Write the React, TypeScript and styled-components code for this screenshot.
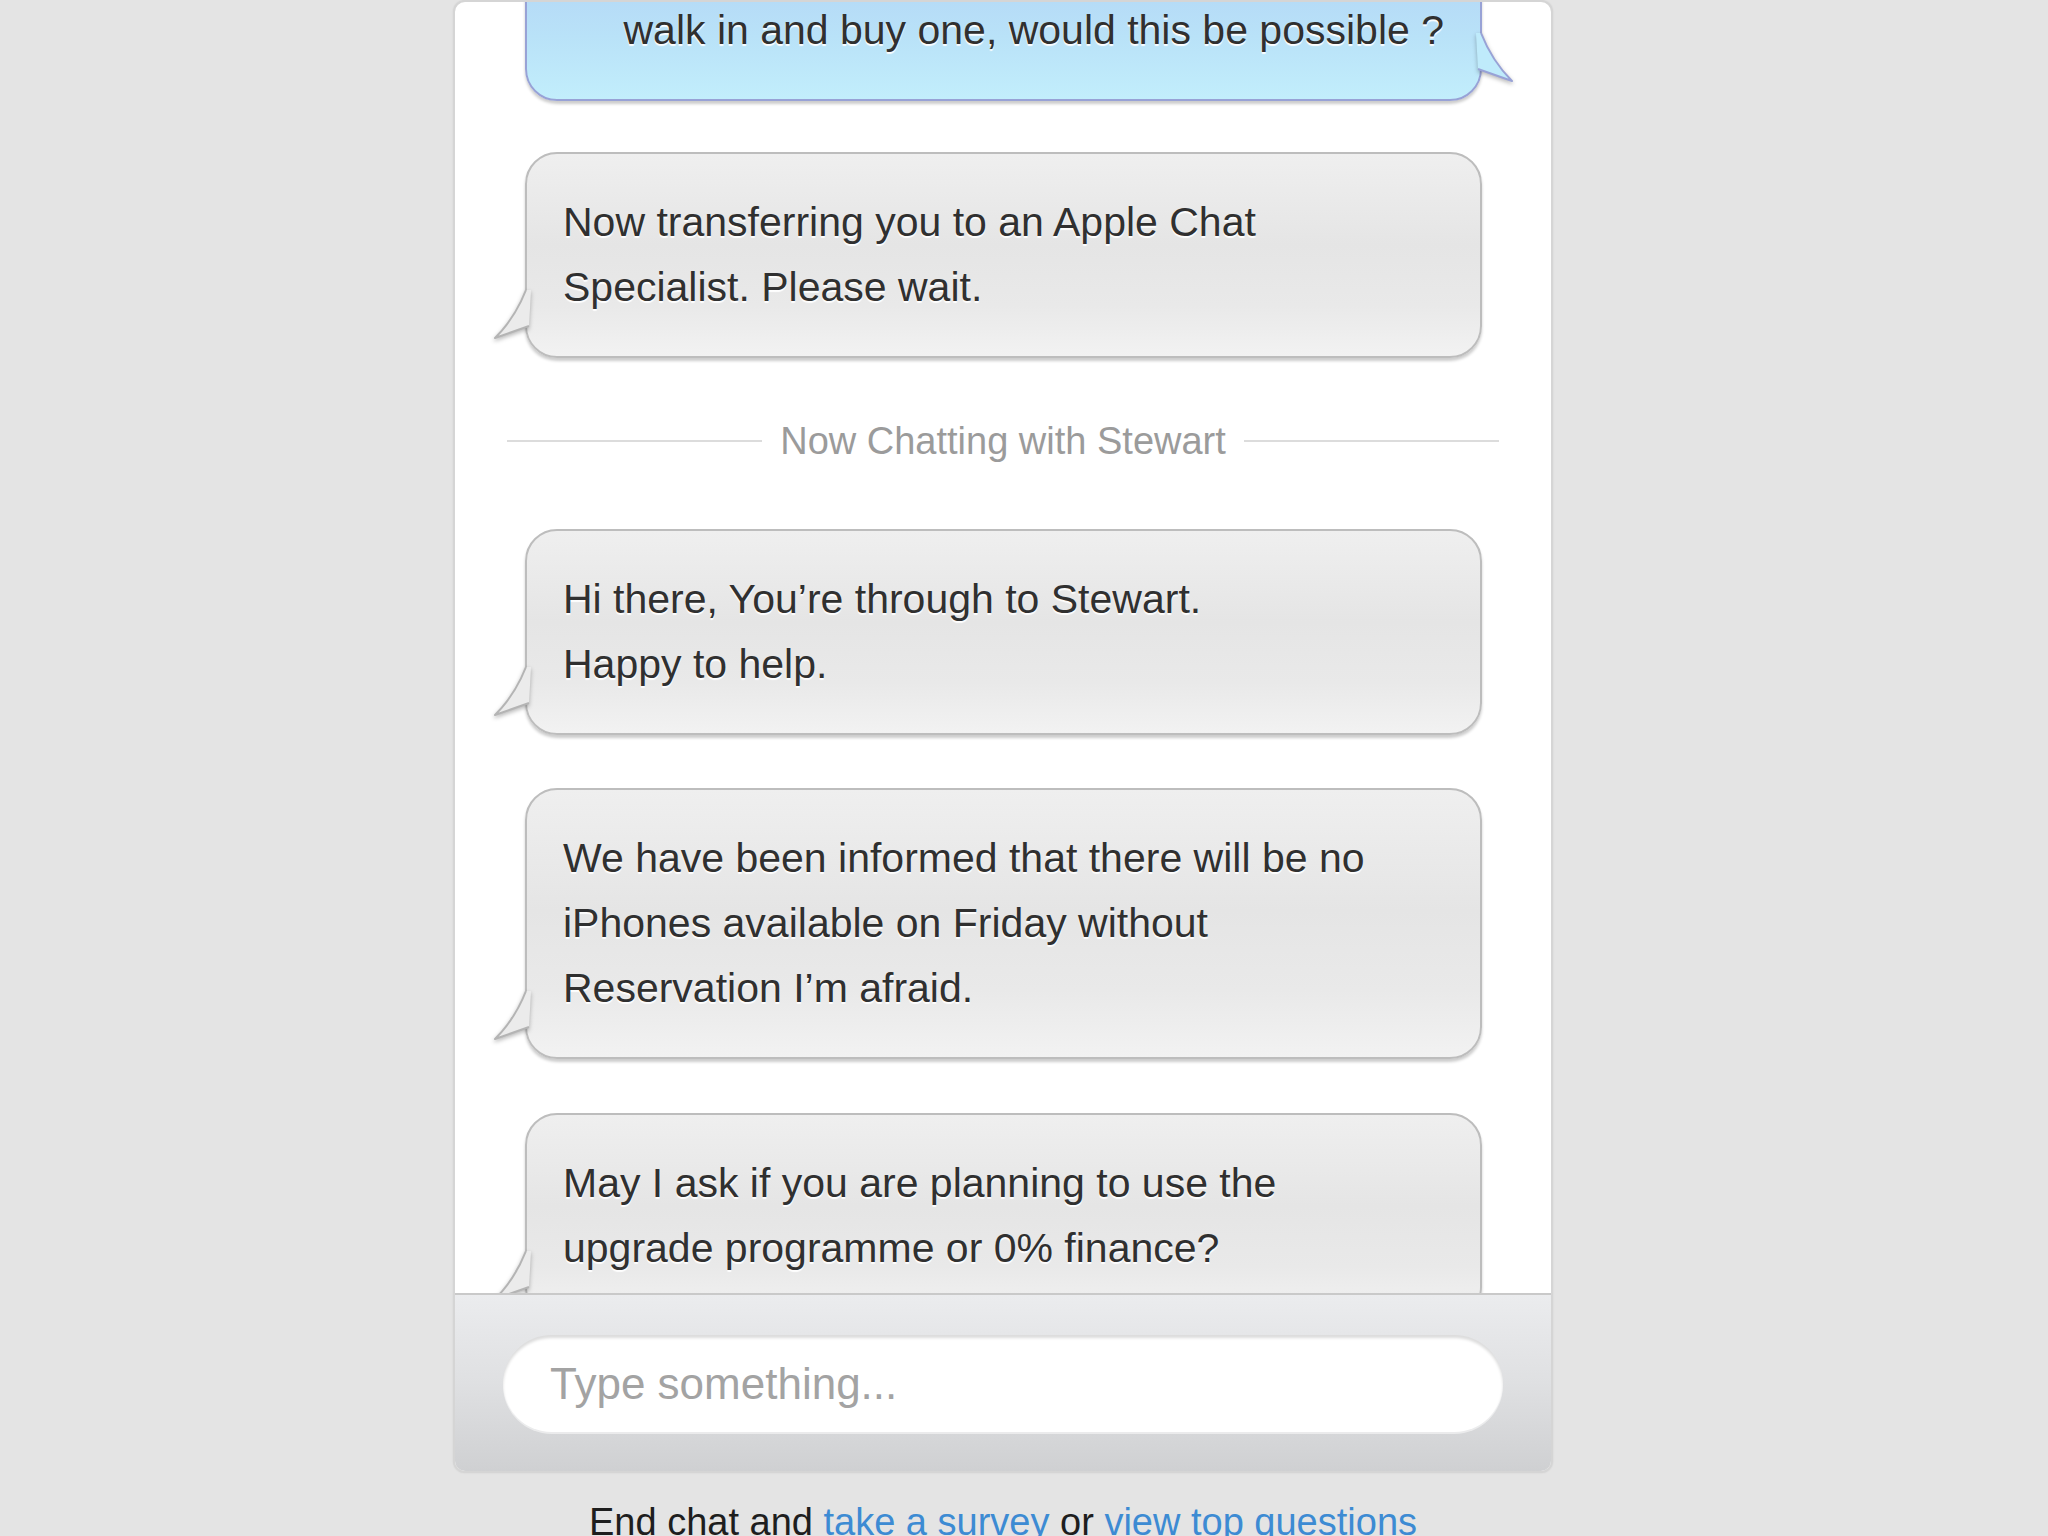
import React from 'react';
import styled, { createGlobalStyle } from 'styled-components';

const GlobalStyle = createGlobalStyle`
  html, body {
    margin: 0;
    padding: 0;
    height: 100%;
    overflow: hidden;
    background: #e4e4e4;
  }
  body {
    font-family: "Liberation Sans", Helvetica, Arial, sans-serif;
  }
`;

const Page = styled.div`
  width: 1100px;
  margin-left: 453px;
`;

const Window = styled.div`
  background: #fff;
  border: 2px solid #d5d5d5;
  border-radius: 12px;
  overflow: hidden;
  box-shadow: 0 0 2px rgba(0, 0, 0, 0.08);
`;

const Messages = styled.div`
  height: 1291px;
  overflow: hidden;
  display: flex;
  flex-direction: column;
`;

const Bubble = styled.div<{ $mine?: boolean; $gap: number; $lift?: number }>`
  position: relative;
  flex: none;
  margin: ${p => -(p.$lift || 0)}px 69px ${p => p.$gap}px 70px;
  padding: ${p => (p.$mine ? '36px 36px 36px 60px' : '36px 50px 36px 36px')};
  border: 2px solid ${p => (p.$mine ? '#98a2d6' : '#bdbdbd')};
  border-radius: 32px;
  background: ${p =>
    p.$mine
      ? 'linear-gradient(to bottom, #b2d5f6 0%, #b9e2f8 55%, #c2eefc 100%)'
      : 'linear-gradient(to bottom, #efefef 0%, #e5e5e5 45%, #e9e9e9 75%, #f2f2f2 100%)'};
  box-shadow: 0 3px 3px rgba(0, 0, 0, 0.2);
  color: #303030;
  font-size: 41px;
  line-height: 65px;
  text-align: ${p => (p.$mine ? 'right' : 'left')};
  text-shadow: 0 2px 1px rgba(255, 255, 255, 0.95);
`;

const Tail = styled.svg<{ $mine?: boolean }>`
  position: absolute;
  bottom: 12px;
  ${p => (p.$mine ? 'right: -34px; transform: scaleX(-1);' : 'left: -34px;')}
  width: 40px;
  height: 56px;
  overflow: visible;
  filter: drop-shadow(0 2px 2px rgba(0, 0, 0, 0.28));
`;

const Divider = styled.div`
  display: flex;
  align-items: center;
  gap: 18px;
  margin: 61px 52px 66px;
  color: #9b9b9b;
  font-size: 38px;
  line-height: 44px;
  white-space: nowrap;

  &::before,
  &::after {
    content: '';
    flex: 1;
    height: 2px;
    background: #dcdcdc;
  }
`;

const Composer = styled.div`
  border-top: 2px solid #c9c9c9;
  background: linear-gradient(to bottom, #ebecee 0%, #dfe0e2 50%, #cfd0d2 100%);
  padding: 40px 48px 39px;
`;

const Field = styled.input`
  display: block;
  box-sizing: border-box;
  width: 100%;
  height: 97px;
  padding: 0 47px;
  border: none;
  border-radius: 49px;
  background: #fff;
  box-shadow: inset 0 3px 3px rgba(0, 0, 0, 0.14), 0 2px 0 rgba(255, 255, 255, 0.5);
  color: #333;
  font: 44px "Liberation Sans", Helvetica, Arial, sans-serif;
  outline: none;

  &::placeholder {
    color: #a3a3a3;
  }
`;

const Links = styled.p`
  margin: 27px 0 0;
  color: #1e1e1e;
  font-size: 38px;
  line-height: 44px;
  text-align: center;

  a {
    color: #3d8bd3;
    text-decoration: none;
  }
`;

type Msg = { lines: string[]; mine?: boolean; gap: number; lift?: number };

const before: Msg[] = [
  { lines: ['walk in and buy one, would this be possible ?'], mine: true, gap: 51, lift: 42 },
  { lines: ['Now transferring you to an Apple Chat', 'Specialist. Please wait.'], gap: 0 },
];

const after: Msg[] = [
  { lines: ['Hi there, You\u2019re through to Stewart.', 'Happy to help.'], gap: 53 },
  {
    lines: [
      'We have been informed that there will be no',
      'iPhones available on Friday without',
      'Reservation I\u2019m afraid.',
    ],
    gap: 54,
  },
  { lines: ['May I ask if you are planning to use the', 'upgrade programme or 0% finance?'], gap: 0 },
];

const BubbleTail = ({ mine }: { mine?: boolean }) => (
  <Tail $mine={mine} viewBox="0 0 40 56">
    <path d="M33 2 Q22 30 2 50 L36 38 L38 2 Z" fill={mine ? '#bfebfb' : '#ebebeb'} />
    <path
      d="M33 2 Q22 30 2 50 L36 38"
      fill="none"
      stroke={mine ? '#98a2d6' : '#b4b4b4'}
      strokeWidth="2"
      strokeLinejoin="round"
    />
  </Tail>
);

const ChatBubble = ({ msg }: { msg: Msg }) => (
  <Bubble $mine={msg.mine} $gap={msg.gap} $lift={msg.lift}>
    {msg.lines.map((line, i) => (
      <React.Fragment key={i}>
        {i > 0 && <br />}
        {line}
      </React.Fragment>
    ))}
    <BubbleTail mine={msg.mine} />
  </Bubble>
);

export default function App() {
  return (
    <>
      <GlobalStyle />
      <Page>
        <Window>
          <Messages>
            {before.map((m, i) => (
              <ChatBubble key={i} msg={m} />
            ))}
            <Divider>Now Chatting with Stewart</Divider>
            {after.map((m, i) => (
              <ChatBubble key={i} msg={m} />
            ))}
          </Messages>
          <Composer>
            <Field placeholder="Type something..." />
          </Composer>
        </Window>
        <Links>
          End chat and <a href="#">take a survey</a> or <a href="#">view top questions</a>
        </Links>
      </Page>
    </>
  );
}
